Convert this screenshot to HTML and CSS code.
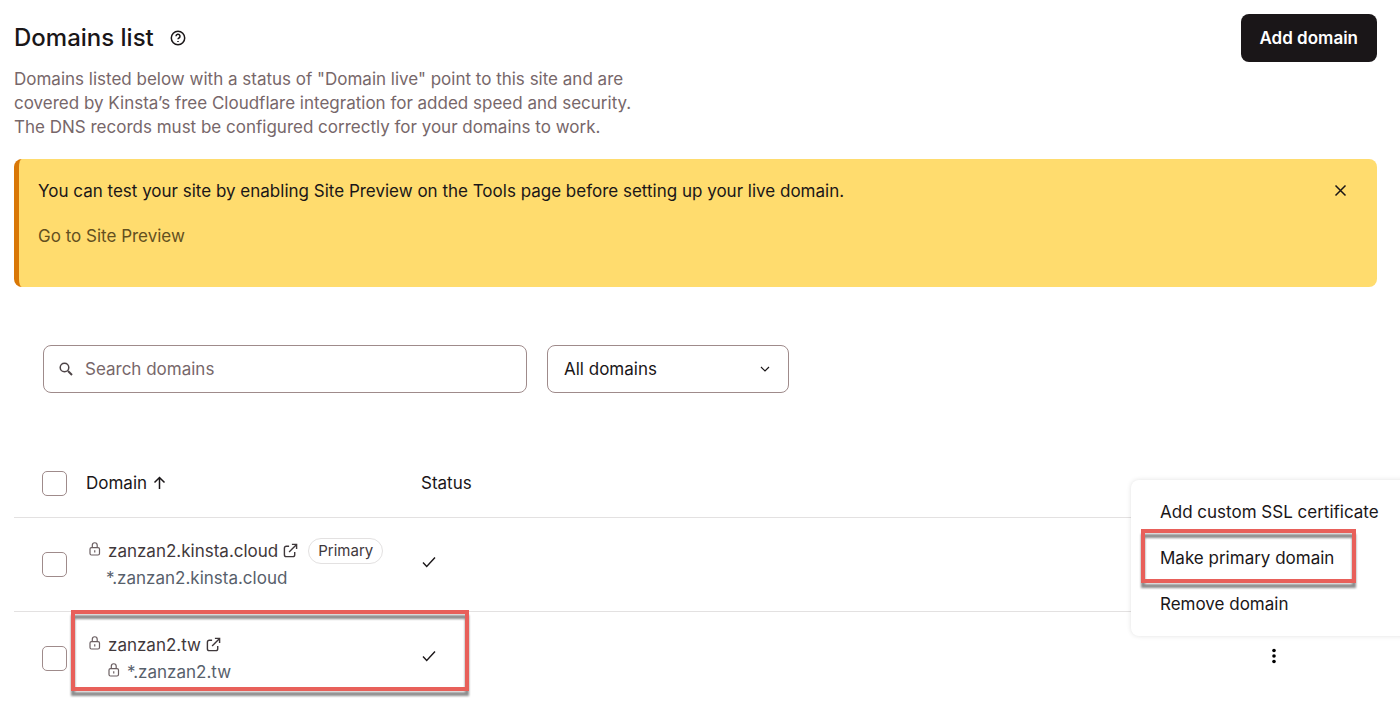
FILE: index.html
```html
<!DOCTYPE html>
<html lang="en">
<head>
  <meta charset="UTF-8">
  <meta name="viewport" content="width=device-width, initial-scale=1">
  <title>Domains list</title>
  <link rel="stylesheet" href="styles.css">
</head>
<body>
  <svg class="sprite" aria-hidden="true">
    <symbol id="lock" viewBox="0 0 12 14">
      <rect x="1" y="5.600" width="9.500" height="7.400" rx="1.500"/>
      <path d="M3.300 5.600V3.200a2.450 2.450 0 0 1 4.900 0v2.400M5.750 8.300v2.200"/>
    </symbol>
    <symbol id="external" viewBox="0 0 16 16">
      <path d="M6.500 3.500H3.500a2 2 0 0 0-2 2v7a2 2 0 0 0 2 2h7a2 2 0 0 0 2-2V9.500M9.500 1.500h5v5M14.500 1.500l-8 8"/>
    </symbol>
    <symbol id="check" viewBox="0 0 14 12">
      <path d="M1 6.500l3.700 4L13 1.500"/>
    </symbol>
  </svg>

  <header class="page-header">
    <div class="intro">
      <div class="title-row">
        <h1>Domains list</h1>
        <button class="icon-btn" type="button" aria-label="Help">
          <svg class="icon" width="16" height="16" viewBox="0 0 16 16">
            <circle cx="8" cy="8" r="6.700"/>
            <path d="M6 6.300a2 2 0 1 1 3 1.700c-.7.4-1 .7-1 1.300M8 11v1"/>
          </svg>
        </button>
      </div>
      <p class="lead">Domains listed below with a status of "Domain live" point to this site and are covered by Kinsta’s free Cloudflare integration for added speed and security. The DNS records must be configured correctly for your domains to work.</p>
    </div>
    <button class="btn" type="button">Add domain</button>
  </header>

  <section class="notice">
    <div>
      <p>You can test your site by enabling Site Preview on the Tools page before setting up your live domain.</p>
      <a href="#">Go to Site Preview</a>
    </div>
    <button class="icon-btn" type="button" aria-label="Close">
      <svg class="icon" width="13" height="13" viewBox="0 0 13 13"><path d="M1.500 1.500l10 10M11.500 1.500l-10 10"/></svg>
    </button>
  </section>

  <form class="filters">
    <label class="search">
      <svg class="icon" width="14" height="14" viewBox="0 0 14 14">
        <circle cx="5.500" cy="5.500" r="4.300"/>
        <path class="handle" d="M9 9l4 4"/>
      </svg>
      <input type="search" placeholder="Search domains" aria-label="Search domains">
    </label>
    <div class="select">
      <select aria-label="Filter domains">
        <option>All domains</option>
      </select>
      <svg class="icon" width="10" height="10" viewBox="0 0 10 10"><path d="M1 3l4 4 4-4"/></svg>
    </div>
  </form>

  <table class="domains">
    <thead>
      <tr>
        <th class="col-check"><input type="checkbox" aria-label="Select all domains"></th>
        <th class="col-domain">
          <span class="sort">Domain
            <svg class="icon" width="13" height="14" viewBox="0 0 13 14"><path d="M6.500 13V1.500M1.500 6.500l5-5 5 5"/></svg>
          </span>
        </th>
        <th class="col-status">Status</th>
        <th class="col-actions"></th>
      </tr>
    </thead>
    <tbody>
      <tr>
        <td><input type="checkbox" aria-label="Select zanzan2.kinsta.cloud"></td>
        <td>
          <div class="domain">
            <svg class="icon lock"><use href="#lock"/></svg>
            <a href="#">zanzan2.kinsta.cloud <svg class="icon external"><use href="#external"/></svg></a>
            <span class="badge">Primary</span>
          </div>
          <div class="wildcard">*.zanzan2.kinsta.cloud</div>
        </td>
        <td><svg class="icon check"><use href="#check"/></svg></td>
        <td></td>
      </tr>
      <tr class="marked">
        <td><input type="checkbox" aria-label="Select zanzan2.tw"></td>
        <td>
          <div class="domain">
            <svg class="icon lock"><use href="#lock"/></svg>
            <a href="#">zanzan2.tw <svg class="icon external"><use href="#external"/></svg></a>
          </div>
          <div class="wildcard"><svg class="icon lock"><use href="#lock"/></svg>*.zanzan2.tw</div>
          <div class="highlight highlight-row"></div>
        </td>
        <td><svg class="icon check"><use href="#check"/></svg></td>
        <td class="actions">
          <button class="icon-btn" type="button" aria-label="Actions">
            <svg width="6" height="16" viewBox="0 0 6 16"><circle cx="3" cy="2.500" r="1.800"/><circle cx="3" cy="8" r="1.800"/><circle cx="3" cy="13.500" r="1.800"/></svg>
          </button>
          <div class="menu">
            <button type="button">Add custom SSL certificate</button>
            <button type="button">Make primary domain</button>
            <button type="button">Remove domain</button>
            <div class="highlight highlight-item"></div>
          </div>
        </td>
      </tr>
    </tbody>
  </table>
</body>
</html>
```

FILE: styles.css
```css
* { box-sizing: border-box; }

body {
  margin: 0;
  padding: 14px 23px 0 14px;
  overflow-x: hidden;
  background: #fff;
  color: #1a1618;
  font: 17px/24px Inter, "Liberation Sans", sans-serif;
}

h1, p { margin: 0; }
h1 { font-size: 24px; line-height: 32px; font-weight: 500; }
a { color: inherit; text-decoration: none; }
button, input, select { font: inherit; color: inherit; }

.sprite { position: absolute; width: 0; height: 0; }
.icon { fill: none; stroke: currentColor; stroke-width: 1.5; flex: none; }
.icon-btn { display: flex; padding: 0; border: 0; background: none; cursor: pointer; }

/* Header */
.page-header { display: flex; justify-content: space-between; align-items: flex-start; }
.intro { padding-top: 8px; }
.title-row { display: flex; align-items: center; gap: 16px; }
.lead { max-width: 624px; margin-top: 13px; color: #77676a; }
.btn {
  height: 48px;
  padding: 0 19px;
  border: 0;
  border-radius: 8px;
  background: #1a1618;
  color: #fff;
  font-weight: 600;
  cursor: pointer;
}

/* Notice */
.notice {
  display: flex;
  justify-content: space-between;
  align-items: flex-start;
  min-height: 128px;
  margin-top: 20px;
  padding: 20px 30px 20px 19px;
  border-left: 5px solid #d97706;
  border-radius: 8px;
  background: #ffdc6e;
}
.notice a { display: inline-block; margin-top: 21px; color: #63501f; }
.notice .icon-btn { padding-top: 5px; }

/* Filters */
.filters { display: flex; gap: 20px; margin: 58px 0 0 29px; }
.search, .select select { border: 1px solid #9f8b8b; border-radius: 8px; height: 48px; }
.search { display: flex; align-items: center; gap: 12px; width: 484px; padding: 0 15px; color: #4d4447; }
.search input { flex: 1; min-width: 0; padding: 0; border: 0; outline: 0; background: none; }
.search input::placeholder { color: #77676a; opacity: 1; }
.search .handle { stroke-width: 2; }
.select { position: relative; width: 242px; }
.select select { width: 100%; padding: 0 16px; background: #fff; appearance: none; }
.select .icon { position: absolute; right: 19px; top: 19px; stroke-width: 1.2; pointer-events: none; }

/* Table */
.domains { width: 100%; margin-top: 57px; border-collapse: collapse; table-layout: fixed; }
.domains th { height: 67px; padding: 0; font-weight: 400; text-align: left; }
.domains td { height: 94px; padding: 0; }
.domains th, .domains td { border-bottom: 1px solid #e3e1e1; }
.domains .marked td { border-bottom: 0; }
.col-check { width: 72px; }
.col-domain { width: 335px; }
.col-actions { width: 206px; }
.sort { display: flex; align-items: center; gap: 6px; }

input[type="checkbox"] {
  display: block;
  width: 25px;
  height: 25px;
  margin: 0 0 0 28px;
  border: 1px solid #9f8b8b;
  border-radius: 5px;
  background: #fff;
  appearance: none;
}

.domain { display: flex; align-items: center; height: 27px; padding-left: 3px; color: #3f383b; }
.domain a { display: flex; align-items: center; gap: 5px; }
.lock { width: 12px; height: 14px; margin: 0 7px 4px 0; color: #6b5f62; stroke-width: 1.2; }
.external { width: 15px; height: 15px; }
.check { display: block; width: 14px; height: 12px; margin: 0 0 4px 1px; stroke-width: 1.4; }
.badge {
  margin-left: 10px;
  padding: 0 9px;
  border: 1px solid #e3e1e1;
  border-radius: 13px;
  font-size: 15px;
}
.wildcard { display: flex; align-items: center; height: 27px; padding-left: 20px; color: #57606b; }
.wildcard .lock { margin-left: 2px; }

/* Row menu */
.marked td { position: relative; }
.actions .icon-btn { margin: 0 0 4px 100px; }
.menu {
  position: absolute;
  right: -39px;
  bottom: 69px;
  width: 285px;
  padding: 9px 0;
  border-radius: 8px;
  background: #fff;
  box-shadow: 0 0 5px rgba(0, 0, 0, .12);
}
.menu button {
  display: block;
  width: 100%;
  height: 46px;
  padding: 0 0 0 29px;
  border: 0;
  background: none;
  text-align: left;
  cursor: pointer;
}

/* Callout frames */
.highlight {
  position: absolute;
  border: 4px solid #e8605a;
  pointer-events: none;
  filter: drop-shadow(0 5px 1px rgba(0, 0, 0, .45));
}
.highlight-row { top: -2px; left: -15px; width: 398px; height: 81px; z-index: 1; }
.highlight-item { top: 49px; left: 10px; width: 215px; height: 54px; }
```
